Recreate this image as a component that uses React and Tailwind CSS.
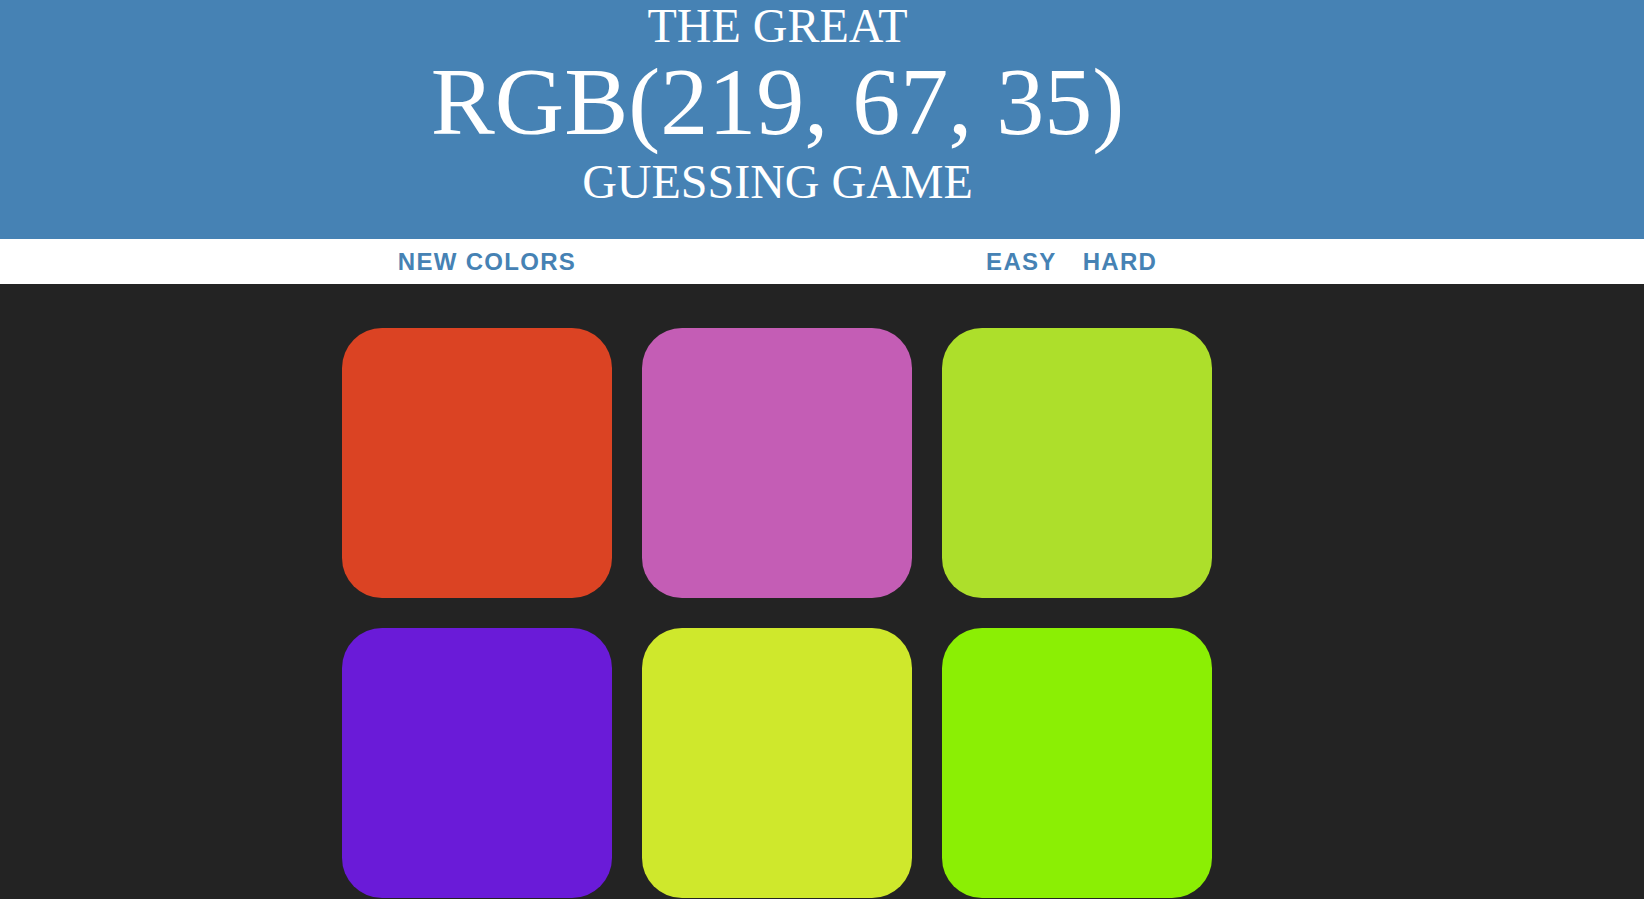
export default function App() {
  const colors = ["#DB4323", "#C45DB5", "#ADDF2B", "#6A1BD8", "#CFE82C", "#8BEF04"];
  return (
    <div className="min-h-screen bg-[#232323]">
      <div className="bg-[#4682B4] h-[239px]">
        <div className="w-[1555px] text-center text-white uppercase font-normal font-['Liberation_Serif','Times_New_Roman',serif]">
          <div className="text-[48px] leading-[52px]">THE GREAT</div>
          <div className="text-[96px] leading-[99px]">RGB(219, 67, 35)</div>
          <div className="text-[48px] leading-[62px]">GUESSING GAME</div>
        </div>
      </div>
      <div className="bg-white h-[45px] pt-[1px]">
        <div className="w-[1555px] h-full flex items-center justify-center font-['Liberation_Sans',Arial,sans-serif] font-bold text-[24px] tracking-[1.3px] text-[#4682B4] uppercase">
          <span>New Colors</span>
          <span className="w-[410px]"></span>
          <span>Easy</span>
          <span className="w-[26px]"></span>
          <span>Hard</span>
        </div>
      </div>
      <div className="w-[1553px] flex justify-center pt-[44px] pb-[30px]">
        <div className="grid grid-cols-[270px_270px_270px] gap-[30px]">
          {colors.map((c, i) => (
            <div key={i} className="w-[270px] h-[270px] rounded-[40px]" style={{ backgroundColor: c }} />
          ))}
        </div>
      </div>
    </div>
  );
}
